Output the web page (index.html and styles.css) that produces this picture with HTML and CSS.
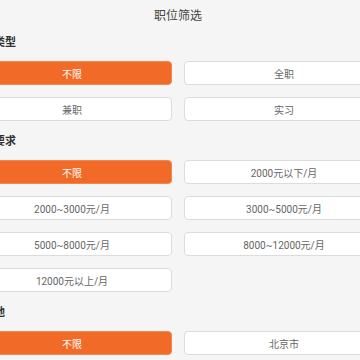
FILE: index.html
```html
<!DOCTYPE html>
<html lang="zh-CN">
<head>
    <meta charset="UTF-8">
    <meta name="viewport" content="width=device-width, initial-scale=1.0">
    <title>职位筛选</title>
    <link rel="stylesheet" href="styles.css">
</head>
<body>
    <div class="page">
        <h1 class="title">职位筛选</h1>

        <div class="section">
            <h2 class="section-title">职位类型</h2>
            <div class="options">
                <button class="option active">不限</button>
                <button class="option">全职</button>
                <button class="option">兼职</button>
                <button class="option">实习</button>
            </div>
        </div>

        <div class="section">
            <h2 class="section-title">薪资要求</h2>
            <div class="options">
                <button class="option active">不限</button>
                <button class="option">2000元以下/月</button>
                <button class="option">2000~3000元/月</button>
                <button class="option">3000~5000元/月</button>
                <button class="option">5000~8000元/月</button>
                <button class="option">8000~12000元/月</button>
                <button class="option">12000元以上/月</button>
            </div>
        </div>

        <div class="section">
            <h2 class="section-title">工作地</h2>
            <div class="options">
                <button class="option active">不限</button>
                <button class="option">北京市</button>
                <button class="option">上海市</button>
                <button class="option">广州市</button>
            </div>
        </div>
    </div>
</body>
</html>
```

FILE: styles.css
```css
body {
    margin: 0;
    background-color: #f5f5f5;
    font-family: Roboto, "Noto Sans CJK SC", sans-serif;
    overflow: hidden;
}

.page {
    width: 412px;
    margin-left: -28px;
}

.title {
    margin: 0;
    height: 33px;
    line-height: 33px;
    font-size: 12px;
    font-weight: normal;
    color: #444;
    text-align: center;
}

.section {
    margin-bottom: 11px;
}

.section-title {
    margin: 0 0 8px;
    height: 20px;
    line-height: 20px;
    font-size: 11px;
    font-weight: bold;
    color: #333;
}

.options {
    display: grid;
    grid-template-columns: 1fr 1fr;
    gap: 12px;
}

.option {
    height: 24px;
    padding: 0;
    font-family: inherit;
    font-size: 10px;
    color: #666;
    background-color: #fff;
    border: 1px solid #dcdcdc;
    border-radius: 4px;
}

.option.active {
    color: #fff;
    background-color: #f26a27;
    border-color: #f4874f;
}
```
